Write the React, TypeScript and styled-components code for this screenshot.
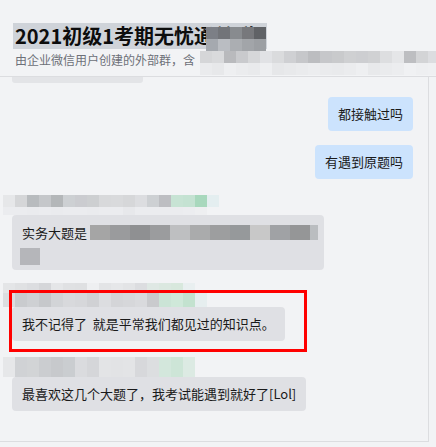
import React from 'react';
import styled, { createGlobalStyle } from 'styled-components';

const GlobalStyle = createGlobalStyle`
  body {
    margin: 0;
    background: #f2f3f5;
    font-family: "Noto Sans CJK SC", "Noto Sans", "Liberation Sans", sans-serif;
  }
`

const headerMosaic = [
  ['#7c7f86', '#727479', '#888b8f', '#77787c', '#606266'],
  ['#a5a9af', '#babdc2', '#abaeb2', '#a2a5a9', '#9c9fa3'],
]

const subtitleMosaic = [
  ['#d5d6d8', '#d9dadc', '#b9babd', '#c9cacd', '#d6d7d9', '#e1e2e5', '#dadbdd', '#cfd0d3', '#c6c7ca', '#bcbdc0',
    '#c6c7ca', '#c9cacc', '#cfd0d2', '#cdced1', '#d0d1d3', '#dddee0', '#e5e6e8', '#bdbec1', '#d3d4d6', '#dcdde0'],
  ['#eaebed', '#e7e8ea', '#eeeff1', '#ebecee', '#e9eaec', '#eeeff1', '#e6e7e9', '#e8e9eb', '#eaebed', '#ecedef',
    '#eaebed', '#e9eaec', '#ebecee', '#eeeff1', '#e8e9eb', '#eaebed', '#ecedef', '#f0f1f3', '#eeeff1', '#eff0f2'],
]

const sender3 = [
  ['#e6e7e9', '#d5d6d8', '#b8bbbe', '#c5c7ca', '#b4b7b9', '#cdd0d3', '#cbccd0', '#cdcfd1', '#d8d9db',
    '#d9dadc', '#d6d7d9', '#dcdde0', '#cdd0d3', '#bdbec2', '#c7e3d4', '#c4e2d2', '#a8d8bd', '#e4eef0'],
  ['#ebecef', '#ebecef', '#eaebee', '#ebecef', '#eaebee', '#ebecef', '#ebecef', '#eaebee', '#ebecef',
    '#ebecef', '#e7e8eb', '#ebecef', '#ebecef', '#ebecef', '#ebecef', '#ecedf0', '#eeeff1', '#f2f3f5'],
]

const sender4 = [
  ['#e4e5e7', '#e0e1e3', '#dcdde0', '#d5d6d9', '#e5e6e8', '#e0e1e3', '#dfe0e2', '#eeeff1', '#e3e4e6',
    '#e6e7e9', '#e3e4e6', '#dcdde0', '#dfe8e4', '#dbe8e0', '#d8e8dd', '#e9eff0', '#f2f3f5', '#f2f3f5'],
  ['#dcdde0', '#c9cbce', '#ced0d3', '#c6c8cb', '#d2d4d7', '#d8d9dc', '#d6d7da', '#d0d1d4', '#dcdde0',
    '#d4d5d8', '#d6d7da', '#d9dadd', '#c9cacd', '#cbe4d6', '#cfe8d9', '#c3e2cf', '#e6eeef', '#f2f3f5'],
]

const sender5 = [
  ['#e6e7e9', '#d0d2d5', '#d2d4d6', '#cbcdd0', '#c7c9cc', '#cacdd0', '#dadbde', '#d5d6d9', '#e3e4e6',
    '#e2e3e5', '#e3e4e6', '#d7d8db', '#dcdee0', '#d3e7dc', '#cde5d7', '#dceae3', '#f2f3f5', '#f2f3f5'],
]

const hiddenText = ['#a5a5a5', '#9a9b9d', '#8f9092', '#9b9c9e', '#bebfc1', '#aaabac', '#9d9e9f', '#96999b',
  '#c8c8c8', '#a0a2a5', '#959697']

function Mosaic({ rows, w, h }: { rows: string[][], w: number, h: number[] }) {
  return (
    <Grid>
      {rows.map((row, r) => (
        <CellRow key={r}>
          {row.map((c, i) => <Cell key={i} $c={c} $w={w} $h={h[r]} />)}
        </CellRow>
      ))}
    </Grid>
  )
}

function App() {
  return (
    <Page>
      <GlobalStyle />
      <Header>
        <Title>2021初级1考期无忧通关群</Title>
        <Subtitle>由企业微信用户创建的外部群，含</Subtitle>
        <TitleBlur>
          <Mosaic rows={headerMosaic} w={12} h={[12, 12]} />
        </TitleBlur>
        <SubtitleBlur>
          <Mosaic rows={subtitleMosaic} w={12} h={[12, 12]} />
        </SubtitleBlur>
      </Header>

      <Body>
        <Smear />
        <Mine $top={14}>都接触过吗</Mine>
        <Mine $top={14}>有遇到原题吗</Mine>

        <Group $top={16}>
          <Mosaic rows={sender3} w={12} h={[12, 8]} />
          <TallBubble>
            <Line>
              实务大题是
              <Hidden>
                {hiddenText.map((c, i) => <Cell key={i} $c={c} $w={20} $h={15} />)}
                <Cell $c="#babdc0" $w={8} $h={15} />
              </Hidden>
            </Line>
            <Cell $c="#b5b6ba" $w={20} $h={17} />
          </TallBubble>
        </Group>

        <Group $top={13}>
          <Mosaic rows={sender4} w={12} h={[10, 14]} />
          <Bubble>我不记得了&nbsp;&nbsp;就是平常我们都见过的知识点。</Bubble>
          <Highlight />
        </Group>

        <Group $top={16}>
          <Mosaic rows={sender5} w={12} h={[20]} />
          <Bubble>最喜欢这几个大题了，我考试能遇到就好了[Lol]</Bubble>
        </Group>
      </Body>
    </Page>
  )
}


const Page = styled.div`
  width: 436px;
  height: 447px;
  overflow: hidden;
  background: #f2f3f5;
  color: #1a1a1a;
`


const Header = styled.div`
  position: relative;
  box-sizing: border-box;
  height: 77px;
  padding: 23px 0 0 13px;
  border-bottom: 1px solid #dcdde0;
`


const Title = styled.div`
  width: 252px;
  height: 26px;
  padding-left: 2px;
  white-space: nowrap;
  background: #cfd3d9;
  font-size: 20px;
  font-weight: 700;
  line-height: 26px;
  color: #0d0d0d;
`


const Subtitle = styled.div`
  margin-top: 2px;
  padding-left: 2px;
  font-size: 12px;
  line-height: 17px;
  color: #6d7078;
`


const TitleBlur = styled.div`
  position: absolute;
  left: 203px;
  top: 27px;
`


const SubtitleBlur = styled.div`
  position: absolute;
  left: 197px;
  top: 51px;
`


const Grid = styled.div`
  display: flex;
  flex-direction: column;
  margin-left: 3px;
`


const CellRow = styled.div`
  display: flex;
`


const Cell = styled.div<{ $c: string, $w: number, $h: number }>`
  flex: none;
  width: ${p => p.$w}px;
  height: ${p => p.$h}px;
  background: ${p => p.$c};
`


const Body = styled.div`
  box-sizing: border-box;
  width: 429px;
  height: 365px;
  border-right: 1px solid #dcdde0;
  border-bottom: 1px solid #dcdde0;
  display: flex;
  flex-direction: column;
`


const Smear = styled.div`
  width: 131px;
  height: 6px;
  margin-left: 12px;
  background: #e3e4e7;
  border-radius: 0 0 3px 3px;
`


const Bubble = styled.div`
  align-self: flex-start;
  margin-left: 12px;
  padding: 0 10px;
  height: 34px;
  line-height: 34px;
  font-size: 13px;
  white-space: nowrap;
  background: #dfe0e4;
  border-radius: 4px;
`


const Mine = styled(Bubble)<{ $top: number }>`
  align-self: flex-end;
  margin: ${p => p.$top}px 15px 0 0;
  background: #cce3fd;
`


const Group = styled.div<{ $top: number }>`
  position: relative;
  display: flex;
  flex-direction: column;
  align-items: flex-start;
  margin-top: ${p => p.$top}px;
`


const TallBubble = styled.div`
  margin-left: 12px;
  box-sizing: border-box;
  width: 312px;
  padding: 10px 8px 5px 8px;
  display: flex;
  flex-direction: column;
  gap: 8px;
  background: #dfe0e4;
  border-radius: 4px;
`


const Line = styled.div`
  display: flex;
  align-items: center;
  height: 15px;
  padding-left: 2px;
  font-size: 13px;
  line-height: 15px;
  white-space: nowrap;
`


const Hidden = styled.div`
  display: flex;
  margin-left: 3px;
`


const Highlight = styled.div`
  position: absolute;
  left: 9px;
  top: 7px;
  box-sizing: border-box;
  width: 298px;
  height: 62px;
  border: 3px solid #ff0000;
`


export default App
